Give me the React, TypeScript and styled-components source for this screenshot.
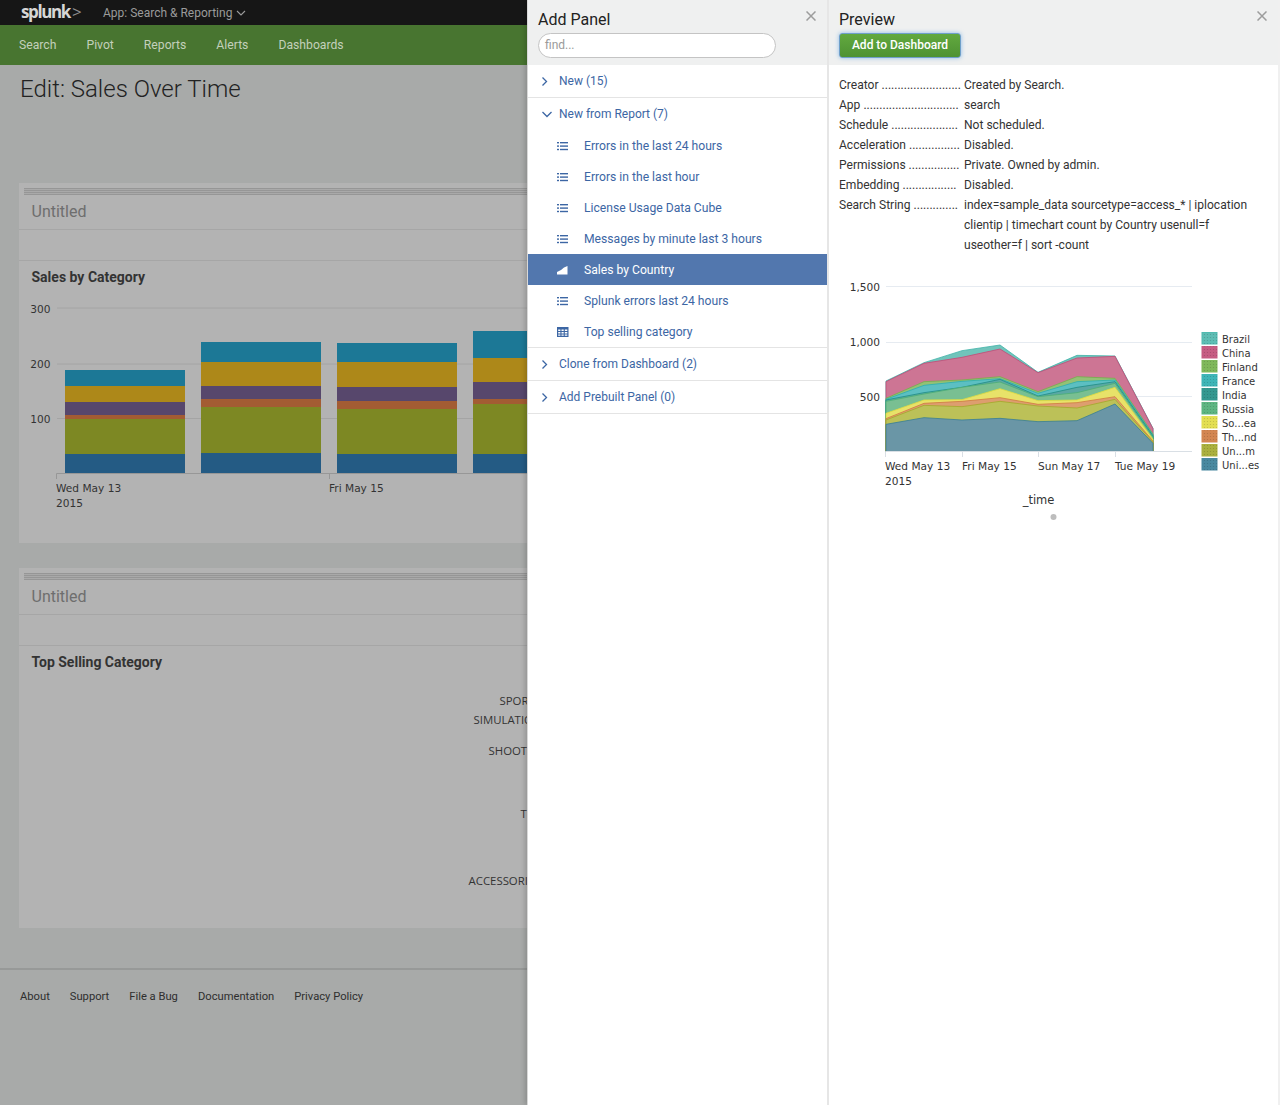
import React from "react";
import styled, { createGlobalStyle } from "styled-components";

const Global = createGlobalStyle`
  html, body { margin: 0; padding: 0; background: #fff; }
  * { box-sizing: border-box; }
  body { font-family: Roboto, "Liberation Sans", sans-serif; font-size: 12px; }
`;

const Page = styled.div`
  display: flex;
  width: 1280px;
  height: 1105px;
  overflow: hidden;
`;
const Backdrop = styled.div`
  flex: 0 0 527px;
  height: 100%;
  overflow: hidden;
  background: #a8aaa9;
`;
const BackdropInner = styled.div`
  width: 1280px;
`;
const TopBar = styled.div`
  height: 25px;
  background: #161616;
  display: flex;
  align-items: center;
  padding-left: 21px;
`;
const Logo = styled.div`
  font-family: "Open Sans", "Liberation Sans", sans-serif;
  font-weight: 700;
  font-size: 17px;
  letter-spacing: -1.4px;
  color: #d6d6d6;
  width: 82px;
  line-height: 23px;
  height: 25px;
  span { color: #8f8f8f; font-weight: 400; margin-left: 2px; }
`;
const AppMenu = styled.div`
  display: flex;
  align-items: center;
  gap: 4px;
  color: #9b9b9b;
  font-size: 12px;
`;
const NavBar = styled.nav`
  height: 40px;
  background: #487530;
  display: flex;
  align-items: center;
  gap: 30px;
  padding-left: 19px;
  color: #c3d0bb;
  font-size: 12.2px;
`;
const PageTitle = styled.h1`
  margin: 0;
  height: 118px;
  padding: 9px 0 0 20px;
  font-weight: 300;
  font-size: 24px;
  line-height: 30px;
  color: #222;
`;
const Panel = styled.section<{ $gap: number }>`
  margin: 0 20px ${(p) => p.$gap}px 19px;
  height: 360px;
  background: #b3b3b3;
`;
const Grip = styled.div`
  margin-left: 5px;
  padding-top: 5px;
  height: 13px;
  &::before {
    content: "";
    display: block;
    height: 7px;
    background: repeating-linear-gradient(to bottom, #969696 0 1px, #a9a9a9 1px 2px);
  }
`;
const PanelTitle = styled.div`
  height: 34px;
  padding-left: 12.5px;
  font-size: 16px;
  line-height: 31px;
  color: #6e6e6e;
  border-bottom: 1px solid #a6a6a6;
`;
const PanelSpacer = styled.div`
  height: 31px;
  border-bottom: 1px solid #a6a6a6;
`;
const ChartTitle = styled.h2`
  margin: 0;
  height: 39px;
  padding: 8px 0 0 12.5px;
  font-size: 14px;
  line-height: 17px;
  font-weight: 700;
  color: #333;
`;
const ChartSvg = styled.svg`
  display: block;
  font-family: "DejaVu Sans", sans-serif;
  font-size: 10.6px;
  fill: #333;
`;
const Footer = styled.footer`
  border-top: 2px solid #979998;
  height: 54px;
  display: flex;
  align-items: center;
  gap: 20px;
  padding-left: 20px;
  color: #2e2e2e;
  font-size: 11.2px;
`;
const Drawer = styled.aside<{ $wide?: boolean }>`
  flex: ${(p) => (p.$wide ? "1 1 auto" : "0 0 302px")};
  height: 100%;
  position: relative;
  background: #fff;
  border-left: ${(p) => (p.$wide ? "0" : "1px solid #d8d8d8")};
  border-right: 2px solid ${(p) => (p.$wide ? "#f0f0f0" : "#e6e6e6")};
  box-shadow: ${(p) => (p.$wide ? "none" : "-2px 0 5px rgba(0, 0, 0, 0.18)")};
`;
const DrawerHeader = styled.header`
  height: 65px;
  background: #eff0f0;
  padding: 10px 0 0 10px;
`;
const DrawerTitle = styled.div`
  font-size: 16px;
  line-height: 19px;
  color: #222;
  height: 23px;
`;
const Close = styled.svg`
  position: absolute;
  top: 11px;
  right: 11px;
  width: 10px;
  height: 10px;
  stroke: #9c9c9c;
  stroke-width: 1.5;
`;
const Find = styled.div`
  width: 238px;
  height: 25px;
  border: 1px solid #c4c4c4;
  border-radius: 13px;
  background: #fff;
  color: #9a9a9a;
  font-size: 12px;
  line-height: 22px;
  padding-left: 6px;
`;
const Section = styled.div`
  border-bottom: 1px solid #e4e4e4;
`;
const SectionHead = styled.div`
  height: 32px;
  display: flex;
  align-items: center;
  color: #3c66a4;
  font-size: 12px;
  svg { flex: 0 0 31px; }
`;
const Item = styled.div<{ $active?: boolean }>`
  height: 31px;
  display: flex;
  align-items: center;
  padding-left: 28px;
  gap: 15px;
  font-size: 12.15px;
  color: ${(p) => (p.$active ? "#fff" : "#3c66a4")};
  background: ${(p) => (p.$active ? "#5277ae" : "transparent")};
  svg { flex: 0 0 13px; }
`;
const GreenButton = styled.div`
  width: 122px;
  height: 25px;
  border-radius: 3px;
  background: linear-gradient(to bottom, #62a93f, #4e9233);
  border: 1px solid #6f9fc9;
  box-shadow: 0 0 4px rgba(90, 160, 230, 0.65);
  color: #fff;
  font-size: 12px;
  font-weight: 500;
  text-align: center;
  line-height: 23px;
`;
const Meta = styled.dl`
  margin: 0;
  padding: 10px 10px 0 10px;
  display: grid;
  grid-template-columns: 125px 1fr;
  font-size: 12.05px;
  line-height: 20px;
  color: #333;
`;
const MetaKey = styled.dt`
  white-space: nowrap;
`;
const MetaValue = styled.dd`
  margin: 0;
  width: 290px;
`;
const AreaSvg = styled.svg`
  display: block;
  margin-top: 20px;
  font-family: "DejaVu Sans", sans-serif;
  font-size: 10.6px;
  fill: #333;
`;

const ChevronRight = () => (
  <svg width="31" height="12" viewBox="0 0 31 12" fill="none" stroke="#3c66a4" strokeWidth="1.3">
    <path d="M14.5 2.5 L18.5 6.5 L14.5 10.5" />
  </svg>
);
const ChevronDown = () => (
  <svg width="31" height="12" viewBox="0 0 31 12" fill="none" stroke="#3c66a4" strokeWidth="1.3">
    <path d="M14.5 4 L19 8.5 L23.5 4" />
  </svg>
);
const ListIcon = () => (
  <svg width="13" height="10" viewBox="0 0 13 10" fill="#3c66a4">
    <rect x="1" y="1" width="2" height="1.4" />
    <rect x="4" y="1" width="8" height="1.4" />
    <rect x="1" y="4.4" width="2" height="1.4" />
    <rect x="4" y="4.4" width="8" height="1.4" />
    <rect x="1" y="7.8" width="2" height="1.4" />
    <rect x="4" y="7.8" width="8" height="1.4" />
  </svg>
);
const AreaIcon = () => (
  <svg width="13" height="10" viewBox="0 0 13 10" fill="#fff">
    <path d="M1 9.5 L1 7 L5 5 L8 2.5 L11.5 1 L11.5 9.5 Z" />
  </svg>
);
const TableIcon = () => (
  <svg width="13" height="10" viewBox="0 0 13 10" fill="#3c66a4">
    <path fillRule="evenodd" d="M1 0h11.5v10H1z M2.2 2.4v1.6h2.2V2.4z M5.5 2.4v1.6h2.2V2.4z M8.8 2.4v1.6h2.5V2.4z M2.2 5v1.4h2.2V5z M5.5 5v1.4h2.2V5z M8.8 5v1.4h2.5V5z M2.2 7.4v1.4h2.2V7.4z M5.5 7.4v1.4h2.2V7.4z M8.8 7.4v1.4h2.5V7.4z" />
  </svg>
);
const CloseIcon = () => (
  <Close viewBox="0 0 10 10">
    <path d="M0.5 0.5 L9.5 9.5 M9.5 0.5 L0.5 9.5" />
  </Close>
);

const barColors = ["#1c7896", "#ad8819", "#57476c", "#a35c33", "#7d8823", "#245b84"];
const bars = [
  { x: 65, y: [370, 386, 402, 415, 419, 454, 473] },
  { x: 201, y: [342, 362, 386, 399, 407, 453, 473] },
  { x: 337, y: [343, 362, 387, 401, 409, 454, 473] },
  { x: 473, y: [331, 358, 382, 399, 404, 454, 473] },
];
const salesTicks: [number, number, string][] = [
  [308, 313, "300"],
  [364, 368, "200"],
  [418.5, 423, "100"],
];

const SalesChart = () => (
  <ChartSvg width="1241" height="220" viewBox="19 300 1241 220">
    {salesTicks.map(([y, ty, label]) => (
      <g key={label}>
        <line x1="57" x2="560" y1={y} y2={y} stroke="#a4a4a4" />
        <text x="50.5" y={ty} textAnchor="end">
          {label}
        </text>
      </g>
    ))}
    {bars.map((b) =>
      barColors.map((c, i) => (
        <rect key={b.x + c} x={b.x} y={b.y[i]} width="120" height={b.y[i + 1] - b.y[i]} fill={c} />
      ))
    )}
    <path d="M56.5 479 V473.5 H560 M329.5 473.5 V479" fill="none" stroke="#979797" />
    <text x="56" y="491.5">Wed May 13</text>
    <text x="56" y="506.5">2015</text>
    <text x="329" y="491.5">Fri May 15</text>
  </ChartSvg>
);

const categories: [number, number, string][] = [
  [499.5, 704, "SPORTS"],
  [473.5, 723, "SIMULATION"],
  [488.5, 754, "SHOOTER"],
  [520.5, 817, "TEE"],
  [468.5, 884, "ACCESSORIES"],
];
const CategoryChart = () => (
  <ChartSvg width="1241" height="230" viewBox="19 684 1241 230">
    {categories.map(([x, y, t]) => (
      <text key={t} x={x} y={y} fontFamily="'Open Sans', sans-serif" fontSize="11.4">
        {t}
      </text>
    ))}
  </ChartSvg>
);

const xs = [886, 924, 962, 1000, 1038, 1077, 1115, 1153];
const toY = (z: number) => 330 + z / 3;
const series: { name: string; fill: string; stroke: string; swatch: string; top: number[] }[] = [
  { name: "Brazil", fill: "#70c4bb", stroke: "#3fb3a8", swatch: "#4db6ac", top: [153, 98, 62, 45, 127, 76, 78, 295] },
  { name: "China", fill: "#cd7594", stroke: "#c04b76", swatch: "#c04b76", top: [155, 100, 82, 57, 128, 84, 79, 296] },
  { name: "Finland", fill: "#93c175", stroke: "#72b14a", swatch: "#72b14a", top: [205, 155, 150, 140, 185, 140, 145, 312] },
  { name: "France", fill: "#5cbfc2", stroke: "#2aaeb0", swatch: "#2aaeb0", top: [208, 166, 154, 146, 190, 155, 150, 315] },
  { name: "India", fill: "#5aa8a3", stroke: "#1f8d85", swatch: "#1f8d85", top: [210, 188, 172, 148, 198, 172, 155, 318] },
  { name: "Russia", fill: "#79bf92", stroke: "#4cae75", swatch: "#4cae75", top: [214, 192, 172, 156, 200, 188, 160, 322] },
  { name: "So...ea", fill: "#e8e269", stroke: "#e0dc3f", swatch: "#e0dc3f", top: [250, 210, 209, 176, 212, 210, 172, 328] },
  { name: "Th...nd", fill: "#dd9e6f", stroke: "#cf7a40", swatch: "#cf7a40", top: [266, 220, 214, 203, 223, 218, 200, 333] },
  { name: "Un...m", fill: "#bcc158", stroke: "#a3a82a", swatch: "#a3a82a", top: [270, 226, 230, 214, 228, 234, 208, 336] },
  { name: "Uni...es", fill: "#6a96a6", stroke: "#367d96", swatch: "#367d96", top: [283, 263, 270, 265, 275, 272, 222, 340] },
];
const areaTicks: [number, number, string][] = [
  [286.5, 290.5, "1,500"],
  [342.5, 345.5, "1,000"],
  [396.5, 400.5, "500"],
];

const AreaChart = () => (
  <AreaSvg width="449" height="265" viewBox="829 275 449 265">
    <defs>
      <pattern id="swatchDots" width="3" height="3" patternUnits="userSpaceOnUse">
        <circle cx="1.5" cy="1.5" r="0.6" fill="#000" fillOpacity="0.16" />
      </pattern>
    </defs>
    {areaTicks.map(([y, ty, label]) => (
      <g key={label}>
        <line x1="886" x2="1192" y1={y} y2={y} stroke="#e6ebf1" />
        <text x="880" y={ty} textAnchor="end">
          {label}
        </text>
      </g>
    ))}
    {series.map((s) => {
      const pts = s.top.map((t, i) => `${xs[i]},${toY(t)}`).join(" ");
      return (
        <polygon
          key={s.name}
          points={`${xs[0]},451.5 ${pts} ${xs[7]},451.5`}
          fill={s.fill}
          stroke={s.stroke}
          strokeWidth="0.8"
        />
      );
    })}
    <path d="M885.5 457 V451.5 H1192 M962.5 451.5 V457 M1038.5 451.5 V457 M1115.5 451.5 V457" fill="none" stroke="#d9dfe5" />
    <text x="885" y="470">Wed May 13</text>
    <text x="885" y="485">2015</text>
    <text x="962" y="470">Fri May 15</text>
    <text x="1038" y="470">Sun May 17</text>
    <text x="1115" y="470">Tue May 19</text>
    <text x="1038.5" y="504" textAnchor="middle" fontSize="11.5">_time</text>
    <circle cx="1053.5" cy="517" r="3" fill="#bdbdbd" />
    {series.map((s, i) => (
      <g key={s.name}>
        <rect x="1202" y={332.5 + i * 14} width="15" height="11.5" fill={s.swatch} stroke={s.stroke} opacity="0.9" />
        <rect x="1202" y={332.5 + i * 14} width="15" height="11.5" fill="url(#swatchDots)" />
        <text x="1222" y={343 + i * 14} fontSize="10">
          {s.name}
        </text>
      </g>
    ))}
  </AreaSvg>
);

const meta: [string, string, number][] = [
  ["Creator", "Created by Search.", 25],
  ["App", "search", 30],
  ["Schedule", "Not scheduled.", 21],
  ["Acceleration", "Disabled.", 16],
  ["Permissions", "Private. Owned by admin.", 16],
  ["Embedding", "Disabled.", 17],
  ["Search String", "index=sample_data sourcetype=access_* | iplocation clientip | timechart count by Country usenull=f useother=f | sort -count", 14],
];

const reports: [string, "list" | "area" | "table"][] = [
  ["Errors in the last 24 hours", "list"],
  ["Errors in the last hour", "list"],
  ["License Usage Data Cube", "list"],
  ["Messages by minute last 3 hours", "list"],
  ["Sales by Country", "area"],
  ["Splunk errors last 24 hours", "list"],
  ["Top selling category", "table"],
];

export default function App() {
  return (
    <Page>
      <Global />
      <Backdrop>
        <BackdropInner>
          <TopBar>
            <Logo>
              splunk<span>&gt;</span>
            </Logo>
            <AppMenu>
              App: Search &amp; Reporting
              <svg width="10" height="6" viewBox="0 0 10 6" fill="none" stroke="#9b9b9b" strokeWidth="1.1">
                <path d="M1 1 L5 5 L9 1" />
              </svg>
            </AppMenu>
          </TopBar>
          <NavBar>
            <span>Search</span>
            <span>Pivot</span>
            <span>Reports</span>
            <span>Alerts</span>
            <span>Dashboards</span>
          </NavBar>
          <PageTitle>Edit: Sales Over Time</PageTitle>
          <Panel $gap={25}>
            <Grip />
            <PanelTitle>Untitled</PanelTitle>
            <PanelSpacer />
            <ChartTitle>Sales by Category</ChartTitle>
            <SalesChart />
          </Panel>
          <Panel $gap={40}>
            <Grip />
            <PanelTitle>Untitled</PanelTitle>
            <PanelSpacer />
            <ChartTitle>Top Selling Category</ChartTitle>
            <CategoryChart />
          </Panel>
          <Footer>
            <span>About</span>
            <span>Support</span>
            <span>File a Bug</span>
            <span>Documentation</span>
            <span>Privacy Policy</span>
          </Footer>
        </BackdropInner>
      </Backdrop>
      <Drawer>
        <DrawerHeader>
          <DrawerTitle>Add Panel</DrawerTitle>
          <Find>find...</Find>
          <CloseIcon />
        </DrawerHeader>
        <Section>
          <SectionHead>
            <ChevronRight />
            New (15)
          </SectionHead>
        </Section>
        <Section>
          <SectionHead>
            <ChevronDown />
            New from Report (7)
          </SectionHead>
          {reports.map(([name, kind], i) => (
            <Item key={name} $active={i === 4}>
              {kind === "list" && <ListIcon />}
              {kind === "area" && <AreaIcon />}
              {kind === "table" && <TableIcon />}
              {name}
            </Item>
          ))}
        </Section>
        <Section>
          <SectionHead>
            <ChevronRight />
            Clone from Dashboard (2)
          </SectionHead>
        </Section>
        <Section>
          <SectionHead>
            <ChevronRight />
            Add Prebuilt Panel (0)
          </SectionHead>
        </Section>
      </Drawer>
      <Drawer $wide>
        <DrawerHeader>
          <DrawerTitle>Preview</DrawerTitle>
          <GreenButton>Add to Dashboard</GreenButton>
          <CloseIcon />
        </DrawerHeader>
        <Meta>
          {meta.map(([k, v, dots]) => (
            <React.Fragment key={k}>
              <MetaKey>
                {k} {".".repeat(dots)}
              </MetaKey>
              <MetaValue>{v}</MetaValue>
            </React.Fragment>
          ))}
        </Meta>
        <AreaChart />
      </Drawer>
    </Page>
  );
}
